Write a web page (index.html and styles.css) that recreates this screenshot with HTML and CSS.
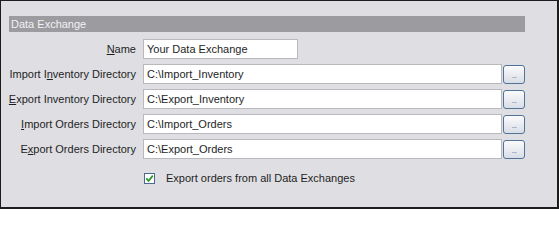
FILE: index.html
```html
<!DOCTYPE html>
<html>
<head>
<meta charset="utf-8">
<link rel="stylesheet" href="styles.css">
</head>
<body>
<div class="panel">
  <div class="header">Data Exchange</div>
  <div class="form">
    <div class="row">
      <label class="lbl"><u>N</u>ame</label>
      <div class="field name"><span>Your Data Exchange</span></div>
    </div>
    <div class="row">
      <label class="lbl">Import I<u>n</u>ventory Directory</label>
      <div class="field path"><span>C:\Import_Inventory</span></div>
      <div class="btn"><span>...</span></div>
    </div>
    <div class="row">
      <label class="lbl"><u>E</u>xport Inventory Directory</label>
      <div class="field path"><span>C:\Export_Inventory</span></div>
      <div class="btn"><span>...</span></div>
    </div>
    <div class="row">
      <label class="lbl"><u>I</u>mport Orders Directory</label>
      <div class="field path"><span>C:\Import_Orders</span></div>
      <div class="btn"><span>...</span></div>
    </div>
    <div class="row">
      <label class="lbl">E<u>x</u>port Orders Directory</label>
      <div class="field path"><span>C:\Export_Orders</span></div>
      <div class="btn"><span>...</span></div>
    </div>
    <div class="check-row">
      <span class="box">
        <svg width="9" height="9" viewBox="0 0 9 9"><path d="M1.2 4.4 L3.6 6.8 L7.8 1.6" fill="none" stroke="#2f9a2a" stroke-width="1.8"/></svg>
      </span>
      <span class="check-text">Export orders from all Data Exchanges</span>
    </div>
  </div>
</div>
</body>
</html>
```
FILE: styles.css
```css
html, body {
  margin: 0;
  padding: 0;
}
body {
  font-family: "Liberation Sans", Arial, sans-serif;
  font-size: 11px;
  color: #1e1e1e;
}
.panel {
  box-sizing: border-box;
  width: 559px;
  height: 209px;
  background: #dfdee3;
  border-top: 1px solid #1c1c1c;
  border-left: 1px solid #1c1c1c;
  border-right: 2px solid #1c1c1c;
  border-bottom: 2px solid #1c1c1c;
  padding-top: 15px;
}
.header {
  margin-left: 8px;
  width: 516px;
  height: 16px;
  line-height: 16px;
  background: #9c9b9f;
  color: #f2f2f4;
  padding-left: 2px;
  box-sizing: border-box;
}
.form {
  display: flex;
  flex-direction: column;
  gap: 5px;
  margin-top: 7px;
}
.row {
  display: flex;
  align-items: center;
  height: 20px;
}
.lbl {
  width: 135px;
  text-align: right;
  margin-right: 7px;
  white-space: nowrap;
}
.lbl u {
  text-decoration-thickness: 1px;
  text-underline-offset: 1px;
}
.field {
  box-sizing: border-box;
  height: 20px;
  background: #fff;
  border: 1px solid #b9b9bd;
  padding-left: 3px;
  line-height: 18px;
  white-space: nowrap;
}
.field.name {
  width: 155px;
}
.field.path {
  width: 359px;
}
.btn {
  box-sizing: border-box;
  width: 22px;
  height: 19px;
  margin-left: 1px;
  border: 1px solid #4f7399;
  border-radius: 3px;
  background: linear-gradient(#fbfbfc, #e6e9ef 60%, #d9dde6);
  display: flex;
  justify-content: center;
  align-items: flex-end;
}
.btn span {
  font-size: 8px;
  color: #5c6f8c;
  line-height: 8px;
  padding-bottom: 3px;
  letter-spacing: -0.5px;
}
.check-row {
  display: flex;
  align-items: center;
  margin-top: 7px;
  padding-left: 143px;
  height: 14px;
}
.box {
  box-sizing: border-box;
  width: 11px;
  height: 11px;
  border: 1px solid #4a6a93;
  background: #fff;
  display: flex;
  align-items: center;
  justify-content: center;
}
.check-text {
  margin-left: 11px;
}
```
